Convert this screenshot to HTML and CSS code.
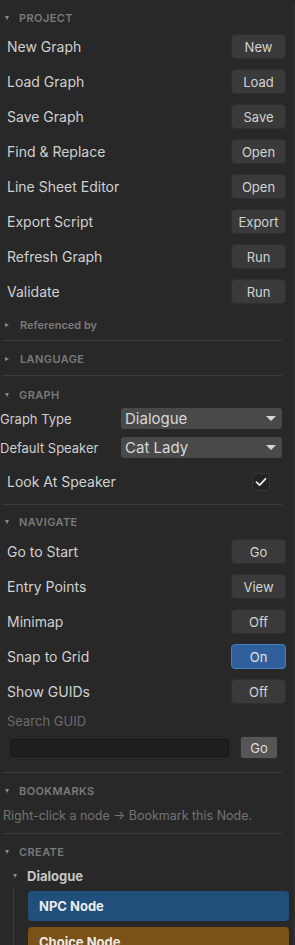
FILE: index.html
```html
<!DOCTYPE html>
<html lang="en">
<head>
  <meta charset="UTF-8" />
  <meta name="viewport" content="width=device-width, initial-scale=1.0"/>
  <title>Graph Inspector</title>
  <link rel="stylesheet" href="styles.css">
</head>
<body>
  <div class="panel">

    <section class="section section-project">
      <div class="section-header"><span class="caret open"></span>PROJECT</div>
      <div class="section-body">
        <div class="row"><span class="row-label">New Graph</span><button class="btn">New</button></div>
        <div class="row"><span class="row-label">Load Graph</span><button class="btn">Load</button></div>
        <div class="row"><span class="row-label">Save Graph</span><button class="btn">Save</button></div>
        <div class="row"><span class="row-label">Find &amp; Replace</span><button class="btn">Open</button></div>
        <div class="row"><span class="row-label">Line Sheet Editor</span><button class="btn">Open</button></div>
        <div class="row"><span class="row-label">Export Script</span><button class="btn">Export</button></div>
        <div class="row"><span class="row-label">Refresh Graph</span><button class="btn">Run</button></div>
        <div class="row"><span class="row-label">Validate</span><button class="btn">Run</button></div>
        <div class="sub-header"><span class="caret"></span>Referenced by</div>
      </div>
    </section>

    <section class="section section-language">
      <div class="section-header"><span class="caret"></span>LANGUAGE</div>
    </section>

    <section class="section section-graph">
      <div class="section-header"><span class="caret open"></span>GRAPH</div>
      <div class="field-row">
        <span class="field-label">Graph Type</span>
        <div class="dropdown">Dialogue<span class="dropdown-arrow"></span></div>
      </div>
      <div class="field-row">
        <span class="field-label">Default Speaker</span>
        <div class="dropdown">Cat Lady<span class="dropdown-arrow"></span></div>
      </div>
      <div class="row check-row">
        <span class="row-label">Look At Speaker</span>
        <span class="checkbox">
          <svg width="12" height="10" viewBox="0 0 12 10"><path d="M1.5 5.2 L4.6 8.2 L10.5 1.8" fill="none" stroke="#e6e6e6" stroke-width="1.8" stroke-linecap="round" stroke-linejoin="round"/></svg>
        </span>
      </div>
    </section>

    <section class="section section-navigate">
      <div class="section-header"><span class="caret open"></span>NAVIGATE</div>
      <div class="section-body">
        <div class="row"><span class="row-label">Go to Start</span><button class="btn">Go</button></div>
        <div class="row"><span class="row-label">Entry Points</span><button class="btn">View</button></div>
        <div class="row"><span class="row-label">Minimap</span><button class="btn">Off</button></div>
        <div class="row"><span class="row-label">Snap to Grid</span><button class="btn btn-on">On</button></div>
        <div class="row"><span class="row-label">Show GUIDs</span><button class="btn">Off</button></div>
        <div class="search-label">Search GUID</div>
        <div class="search-row">
          <input class="search-input" type="text" />
          <button class="btn-go">Go</button>
        </div>
      </div>
    </section>

    <section class="section section-bookmarks">
      <div class="section-header"><span class="caret open"></span>BOOKMARKS</div>
      <div class="hint">Right-click a node → Bookmark this Node.</div>
    </section>

    <section class="section-create">
      <div class="section-header"><span class="caret open"></span>CREATE</div>
      <div class="group-header"><span class="caret open"></span>Dialogue</div>
      <div class="group-body">
        <div class="node-btn node-npc">NPC Node</div>
        <div class="node-btn node-choice">Choice Node</div>
      </div>
    </section>

  </div>
</body>
</html>
```

FILE: styles.css
```css
* {
  box-sizing: border-box;
}

html, body {
  height: 100%;
}

body {
  margin: 0;
  background: #282828;
  font-family: Inter, 'Noto Sans', sans-serif;
  color: #d2d2d2;
  overflow: hidden;
}

.panel {
  height: 100%;
  border-right: 2px solid #2e2e2e;
}

/* sections and dividers */

.section {
  margin: 0 11px 0 3px;
  border-bottom: 1px solid #3b3b3b;
}

.section-header {
  display: flex;
  align-items: center;
  height: 26px;
  margin-top: 5px;
  padding-left: 2px;
  font-size: 11px;
  font-weight: 600;
  letter-spacing: 0.4px;
  color: #7a7a7a;
}

.caret {
  width: 0;
  height: 0;
  margin-right: 11px;
  border-top: 2.5px solid transparent;
  border-bottom: 2.5px solid transparent;
  border-left: 4px solid #8a8a8a;
}

.caret.open {
  border-left: 2.5px solid transparent;
  border-right: 2.5px solid transparent;
  border-top: 4px solid #8a8a8a;
  border-bottom: none;
  margin-right: 10px;
  margin-left: 0;
}

.section-body {
  padding-top: 3px;
}

/* label + button rows */

.row {
  display: flex;
  align-items: center;
  justify-content: space-between;
  height: 25px;
  margin-bottom: 10px;
  padding-left: 4px;
  margin-right: -4px;
}

.row-label {
  font-size: 14px;
  color: #d0d0d0;
}

.btn {
  width: 55px;
  height: 25px;
  padding: 0;
  background: #3a3a3a;
  border: 1px solid #2f2f2f;
  border-radius: 4px;
  font-family: Inter, 'Noto Sans', sans-serif;
  font-size: 13px;
  color: #d2d2d2;
}

.btn-on {
  background: #2f609c;
  border-color: #4a7fbd;
  color: #e4e4e4;
}

.sub-header {
  display: flex;
  align-items: center;
  height: 22px;
  margin-bottom: 4px;
  padding-left: 2px;
  font-size: 11px;
  font-weight: 600;
  color: #7a7a7a;
}

.section-language {
  padding-bottom: 3px;
}

/* graph fields */

.section-graph {
  padding-bottom: 10px;
}

.section-graph .section-header {
  margin-top: 6px;
}

.field-row {
  display: flex;
  align-items: center;
  height: 21px;
  margin-left: -3px;
  margin-bottom: 8px;
}

.field-label {
  width: 121px;
  font-size: 13px;
  color: #cfcfcf;
}

.dropdown {
  position: relative;
  flex: 1;
  height: 21px;
  padding-left: 4px;
  background: #494949;
  border-radius: 3px;
  font-size: 15px;
  line-height: 21px;
  color: #d8d8d8;
}

.dropdown-arrow {
  position: absolute;
  right: 6px;
  top: 8px;
  width: 0;
  height: 0;
  border-left: 5px solid transparent;
  border-right: 5px solid transparent;
  border-top: 5px solid #d6d6d6;
}

.section-graph .check-row {
  margin-top: 11px;
  margin-bottom: 0;
  margin-right: 12px;
}

.checkbox {
  display: flex;
  align-items: center;
  justify-content: center;
  width: 18px;
  height: 18px;
  background: #232323;
  border: 1px solid #353535;
  border-radius: 3px;
}

/* navigate */

.section-navigate .section-header {
  margin-top: 4px;
}

.section-navigate .section-body {
  padding-top: 4px;
}

.search-label {
  height: 14px;
  margin-bottom: 8px;
  padding-left: 4px;
  font-size: 13px;
  line-height: 14px;
  color: #6c6c6c;
}

.search-row {
  display: flex;
  align-items: center;
  height: 23px;
  margin-bottom: 13px;
  padding-left: 7px;
}

.search-input {
  width: 219px;
  height: 18px;
  background: #1f1f1f;
  border: 1px solid #161616;
  border-radius: 3px;
  outline: none;
}

.btn-go {
  width: 38px;
  height: 23px;
  margin-left: 11px;
  padding: 0;
  background: #565656;
  border: 1px solid #2c2c2c;
  border-radius: 3px;
  font-family: Inter, 'Noto Sans', sans-serif;
  font-size: 13px;
  color: #dcdcdc;
}

/* bookmarks */

.hint {
  height: 18px;
  margin-top: 3px;
  margin-bottom: 8px;
  font-size: 12.5px;
  line-height: 18px;
  color: #737373;
}

/* create */

.section-create {
  margin-left: 3px;
}

.group-header {
  display: flex;
  align-items: center;
  height: 22px;
  padding-left: 10px;
  font-size: 13px;
  font-weight: 700;
  color: #c6c6c6;
}

.group-header .caret.open {
  margin-right: 10px;
}

.group-body {
  margin-left: 10px;
  margin-top: 1px;
  padding-top: 3px;
  padding-left: 14px;
  border-left: 1px solid #3c3c3c;
}

.node-btn {
  width: 261px;
  height: 30px;
  margin-bottom: 6px;
  padding-left: 11px;
  border-radius: 4px;
  font-size: 13px;
  font-weight: 700;
  line-height: 30px;
  color: #ececec;
}

.node-npc {
  background: #1f4f7a;
}

.node-choice {
  background: #7a5218;
}
```
